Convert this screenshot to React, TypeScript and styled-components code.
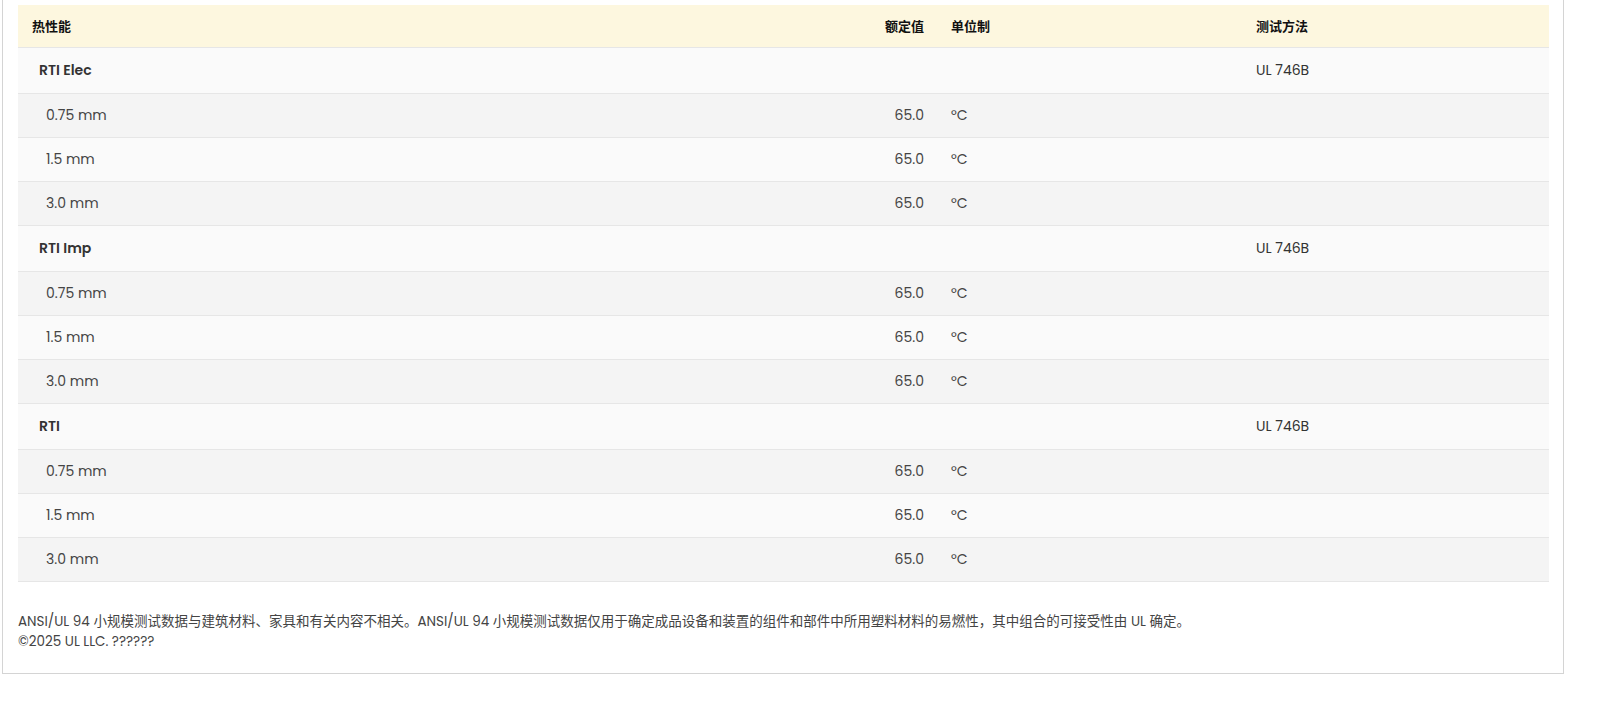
import styled, { createGlobalStyle } from 'styled-components'

const Global = createGlobalStyle`
  body { margin: 0; background: #fff; font-family: Poppins, Inter, "Noto Sans", "Noto Sans CJK SC", sans-serif; }
`

interface Group {
  name: string
  method: string
  rows: string[]
}

const groups: Group[] = [
  { name: 'RTI Elec', method: 'UL 746B', rows: ['0.75 mm', '1.5 mm', '3.0 mm'] },
  { name: 'RTI Imp', method: 'UL 746B', rows: ['0.75 mm', '1.5 mm', '3.0 mm'] },
  { name: 'RTI', method: 'UL 746B', rows: ['0.75 mm', '1.5 mm', '3.0 mm'] },
]

const App = () => {
  return (
    <Frame>
      <Global />
      <Table>
        <HeaderRow>
          <Cell pl="14px">热性能</Cell>
          <ValueCell>额定值</ValueCell>
          <UnitCell>单位制</UnitCell>
          <Cell>测试方法</Cell>
        </HeaderRow>
        {groups.map((g) => (
          <div key={g.name}>
            <GroupRow>
              <GroupName>{g.name}</GroupName>
              <ValueCell />
              <UnitCell />
              <Cell>{g.method}</Cell>
            </GroupRow>
            {g.rows.map((r, i) => (
              <SubRow key={r} dark={i !== 1}>
                <Cell pl="28px">{r}</Cell>
                <ValueCell>65.0</ValueCell>
                <UnitCell>°C</UnitCell>
                <Cell />
              </SubRow>
            ))}
          </div>
        ))}
      </Table>
      <Note>
        ANSI/UL 94 小规模测试数据与建筑材料、家具和有关内容不相关。ANSI/UL 94 小规模测试数据仅用于确定成品设备和装置的组件和部件中所用塑料材料的易燃性，其中组合的可接受性由 UL 确定。
        <br />
        ©2025 UL LLC. ??????
      </Note>
    </Frame>
  )
}

export default App

const Frame = styled.div`
  margin-left: 2px;
  width: 1562px;
  height: 674px;
  box-sizing: border-box;
  border: 1px solid #d4d4d4;
  border-top: none;
  padding: 5px 14px 0 15px;
`
const Table = styled.div`
  display: flex;
  flex-direction: column;
  color: #333;
  font-size: 14px;
`
const Row = styled.div`
  display: grid;
  grid-template-columns: 600px 306px 332px 1fr;
  align-items: center;
  border-bottom: 1px solid #e6e6e6;
  box-sizing: border-box;
`
const HeaderRow = styled(Row)`
  height: 43px;
  background: #fdf7df;
  font-weight: 600;
  font-size: 13px;
  color: #111;
`
const GroupRow = styled(Row)`
  height: 46px;
  background: #fafafa;
`
const SubRow = styled(Row)<{ dark: boolean }>`
  height: 44px;
  background: ${(p) => (p.dark ? '#f4f4f4' : '#fafafa')};
  color: #444;
`
const Cell = styled.div<{ pl?: string }>`
  padding-left: ${(p) => p.pl || '0'};
  white-space: nowrap;
`
const GroupName = styled.div`
  padding-left: 21px;
  font-weight: 600;
  white-space: nowrap;
`
const ValueCell = styled.div`
  text-align: right;
  white-space: nowrap;
`
const UnitCell = styled.div`
  padding-left: 27px;
  white-space: nowrap;
`
const Note = styled.div`
  margin-top: 30px;
  font-size: 13.5px;
  line-height: 20px;
  color: #444;
`
